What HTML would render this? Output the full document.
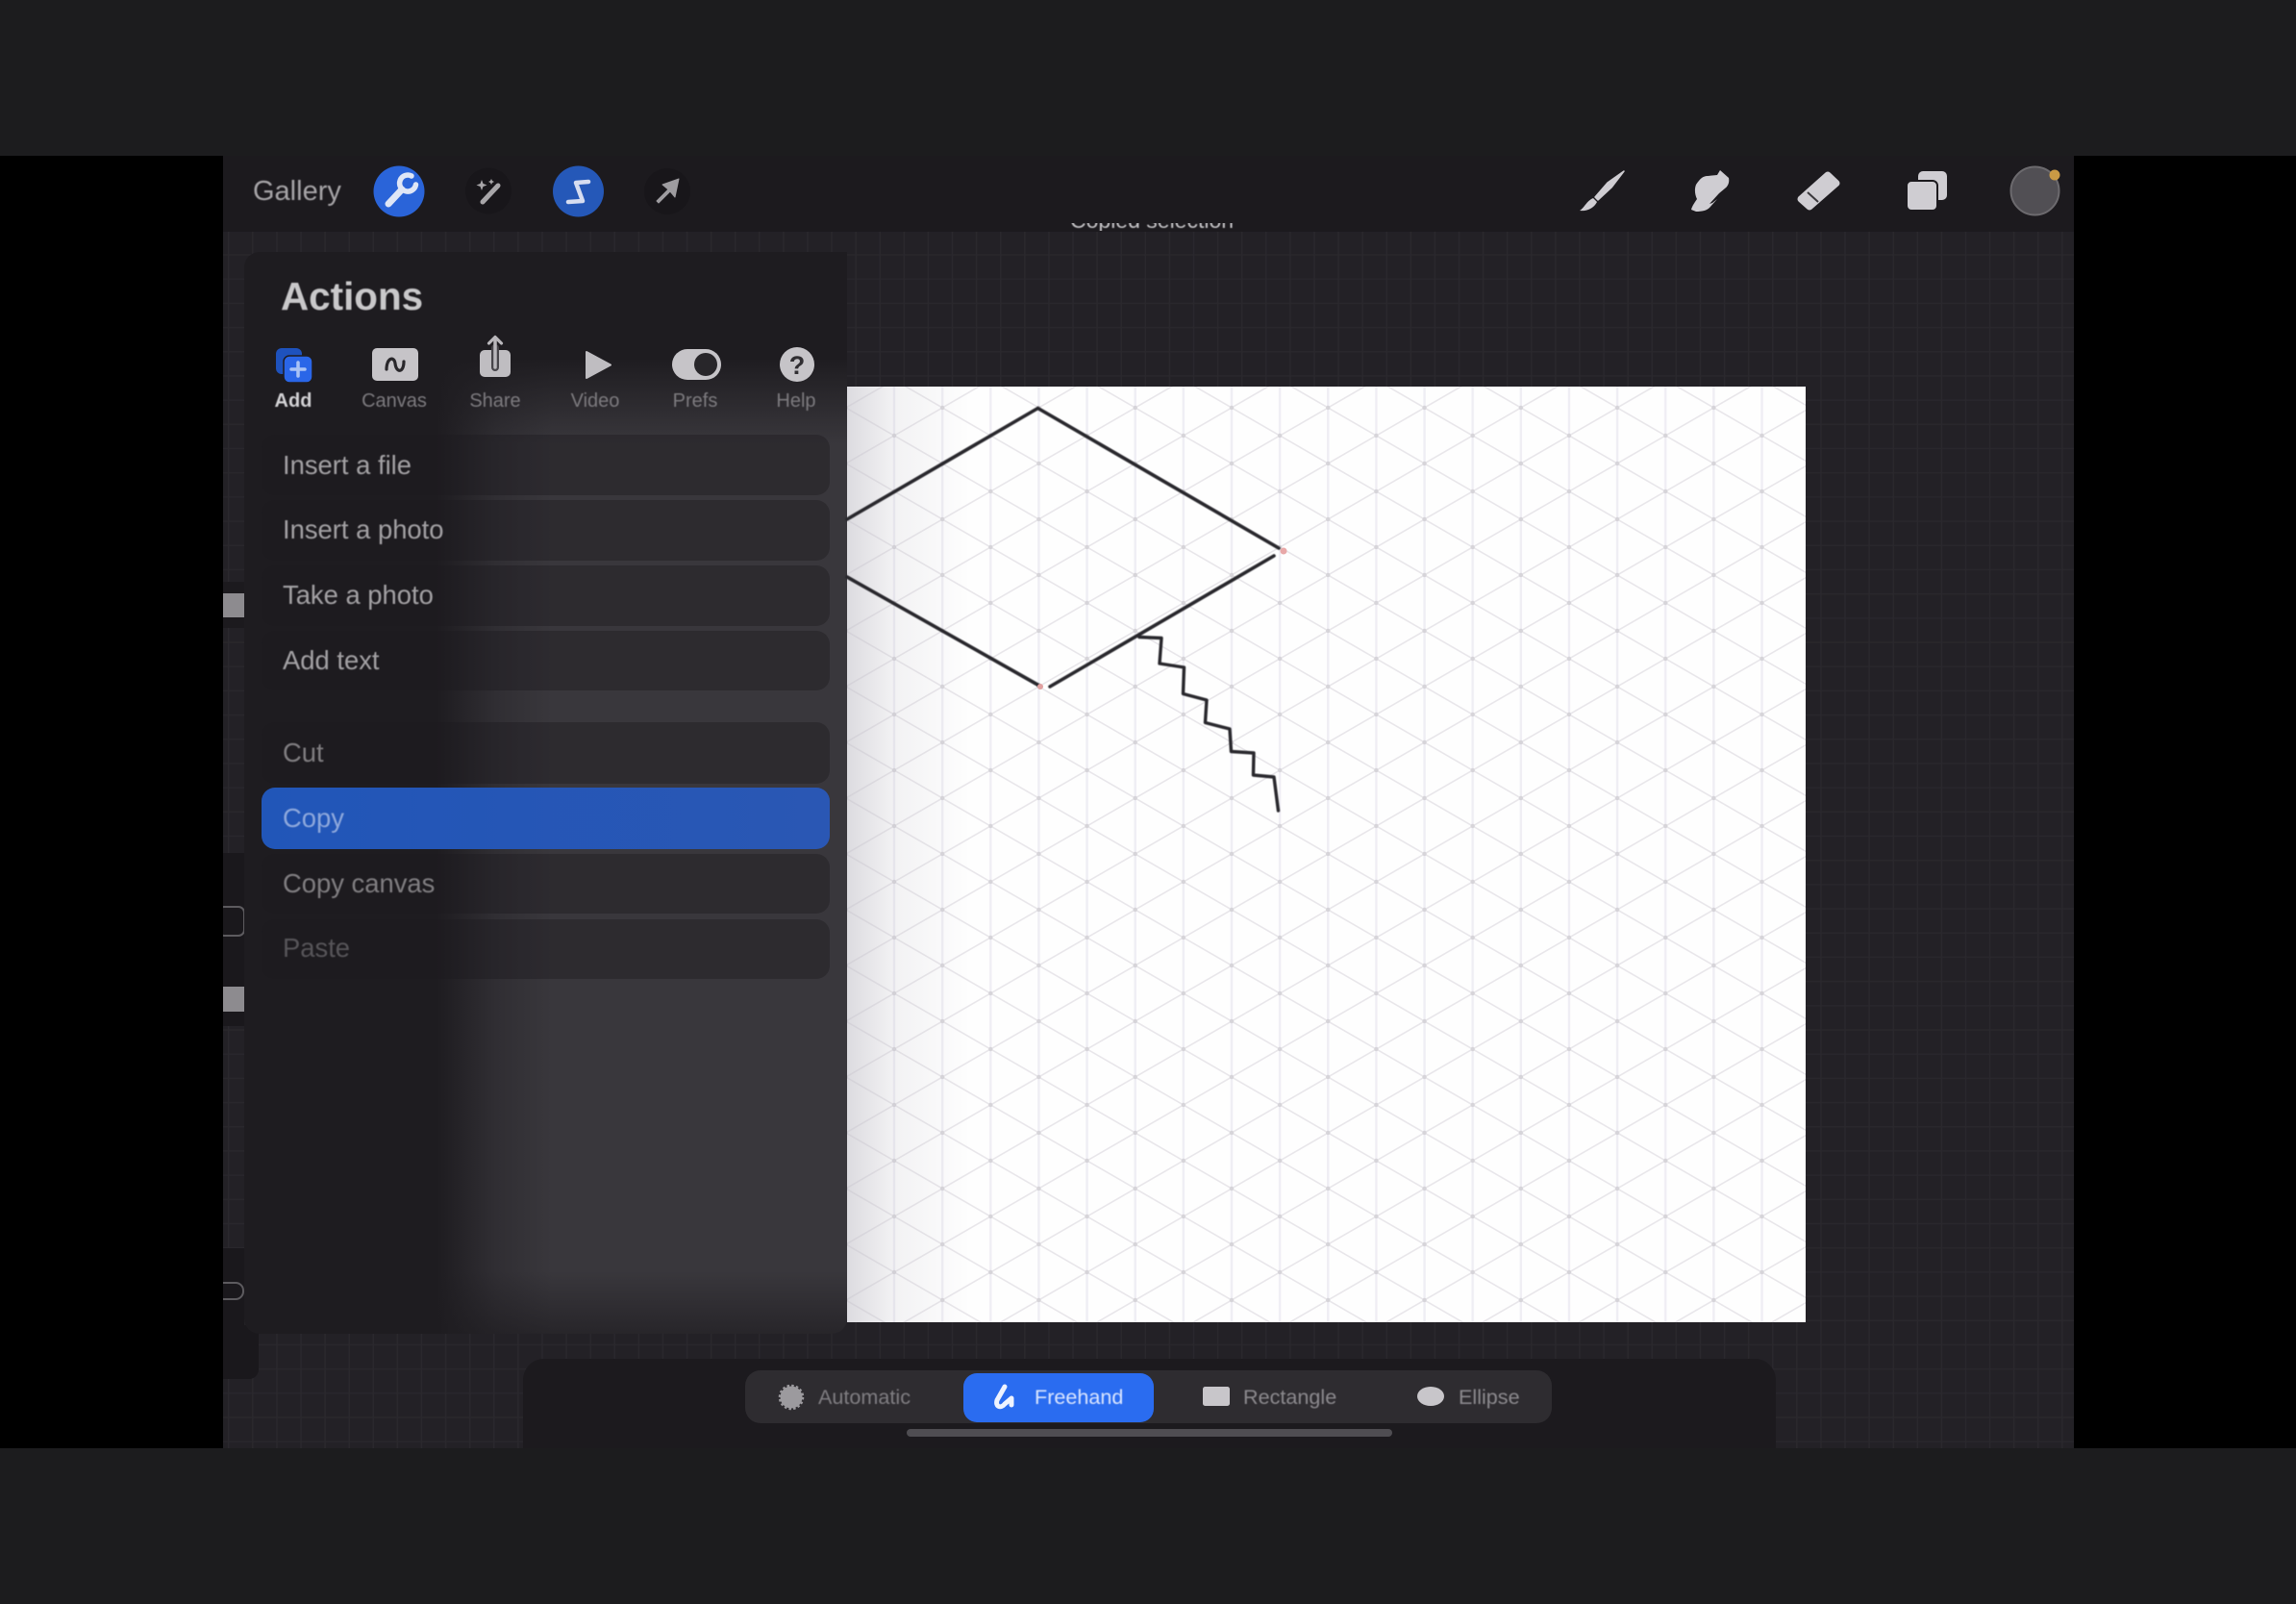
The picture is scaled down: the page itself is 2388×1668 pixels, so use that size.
<!DOCTYPE html>
<html><head><meta charset="utf-8"><style>
html,body{margin:0;padding:0;background:#1c1c1e;}
body{position:relative;width:2388px;height:1668px;overflow:hidden;font-family:"Liberation Sans",sans-serif;}
.a{position:absolute;}
.t{position:absolute;white-space:nowrap;filter:blur(.5px);}
.row{position:absolute;left:272px;width:591px;background:rgba(28,26,30,.42);border-radius:14px;}
.rt{position:absolute;left:294px;font-size:27.4px;line-height:32px;white-space:nowrap;filter:blur(.5px);}
.tab{position:absolute;top:405px;width:110px;text-align:center;font-size:20px;line-height:24px;color:#7d7b7f;filter:blur(.5px);}
.btm{position:absolute;top:1440px;font-size:21.6px;line-height:26px;color:#807e82;white-space:nowrap;filter:blur(.5px);}
</style></head><body>

<div class="a" style="left:0;top:162px;width:2388px;height:1344px;background:#000"></div>
<div class="a" style="left:232px;top:162px;width:1925px;height:1344px;background-color:#232126;background-image:linear-gradient(90deg,#2a282d 1.5px,transparent 1.5px),linear-gradient(0deg,#29272c 1.5px,transparent 1.5px);background-size:25.1px 25.2px;background-position:5px 3px"></div>
<div class="a" style="left:232px;top:162px;width:1925px;height:79px;background:#1c1a1e"></div>

<!-- left sidebar remnants -->
<div class="a" style="left:232px;top:605px;width:22px;height:48px;background:#1c1a1e"></div>
<div class="a" style="left:232px;top:617px;width:22px;height:25px;background:#8d8b8f"></div>
<div class="a" style="left:232px;top:887px;width:22px;height:180px;background:#1a181c"></div>
<div class="a" style="left:226px;top:942px;width:25px;height:28px;border:2px solid #5d5b5f;border-radius:7px;box-sizing:content-box"></div>
<div class="a" style="left:232px;top:1026px;width:22px;height:26px;background:#8d8b8f"></div>
<div class="a" style="left:232px;top:1298px;width:22px;height:90px;background:#1a181c"></div>
<div class="a" style="left:232px;top:1378px;width:37px;height:56px;background:#1a181c;border-radius:0 10px 10px 0"></div>
<div class="a" style="left:224px;top:1333px;width:26px;height:15px;border:2px solid #5d5b5f;border-radius:9px"></div>
<div class="a" style="left:0;top:162px;width:232px;height:1344px;background:#000"></div>

<!-- actions panel -->
<div class="a" style="left:254px;top:262px;width:627px;height:1125px;border-radius:16px 0 16px 16px;background:linear-gradient(180deg,#1e1c20 0,#1e1c20 110px,rgba(30,28,32,0) 200px,rgba(30,28,32,0) 1060px,rgba(30,28,32,.65) 1125px),linear-gradient(90deg,#1e1c20 0,#1e1c20 200px,#302e33 262px,#39373c 320px,#39373c 100%)"></div>
<div class="row" style="top:452px;height:63px"></div>
<div class="row" style="top:520px;height:63px"></div>
<div class="row" style="top:588px;height:63px"></div>
<div class="row" style="top:656px;height:62px"></div>
<div class="row" style="top:751px;height:64px"></div>
<div class="row" style="top:819px;height:64px;background:linear-gradient(90deg,#2156b8,#2a57b4)"></div>
<div class="row" style="top:888px;height:62px"></div>
<div class="row" style="top:956px;height:62px"></div>

<div class="t" style="left:292px;top:284px;font-size:40.4px;line-height:48px;font-weight:bold;color:#c9c8ca">Actions</div>
<div class="tab" style="left:250px;color:#d4d3d6;font-weight:bold">Add</div>
<div class="tab" style="left:355px">Canvas</div>
<div class="tab" style="left:460px">Share</div>
<div class="tab" style="left:564px">Video</div>
<div class="tab" style="left:668px">Prefs</div>
<div class="tab" style="left:773px">Help</div>

<div class="rt" style="top:468px;color:#a3a1a4">Insert a file</div>
<div class="rt" style="top:535px;color:#a3a1a4">Insert a photo</div>
<div class="rt" style="top:603px;color:#a3a1a4">Take a photo</div>
<div class="rt" style="top:671px;color:#a3a1a4">Add text</div>
<div class="rt" style="top:767px;color:#807e81">Cut</div>
<div class="rt" style="top:835px;color:#8ea8dc">Copy</div>
<div class="rt" style="top:903px;color:#807e81">Copy canvas</div>
<div class="rt" style="top:970px;color:#575559">Paste</div>

<div class="t" style="left:263px;top:182px;font-size:29px;line-height:34px;color:#a6a4a7">Gallery</div>

<!-- toast clipped -->
<div class="a" style="left:1100px;top:232px;width:200px;height:8px;overflow:hidden">
  <div class="t" style="left:13px;top:-17px;font-size:23px;line-height:28px;color:#c4c3c6">Copied selection</div>
</div>

<!-- bottom bar -->
<div class="a" style="left:544px;top:1413px;width:1303px;height:93px;background:#1c1a1e;border-radius:22px 22px 0 0"></div>
<div class="a" style="left:775px;top:1425px;width:839px;height:55px;background:#2e2c30;border-radius:16px"></div>
<div class="a" style="left:1002px;top:1428px;width:198px;height:51px;background:#2a6cf0;border-radius:14px"></div>
<div class="a" style="left:943px;top:1486px;width:505px;height:8px;background:#4f4d52;border-radius:4px"></div>
<div class="btm" style="left:851px">Automatic</div>
<div class="btm" style="left:1076px;color:#dbe6ff">Freehand</div>
<div class="btm" style="left:1293px;color:#8c8a8e">Rectangle</div>
<div class="btm" style="left:1517px;color:#8c8a8e">Ellipse</div>

<svg class="a" style="left:0;top:0" width="2388" height="1668" viewBox="0 0 2388 1668" fill="none">
<defs>
  <pattern id="iso" patternUnits="userSpaceOnUse" x="930" y="395" width="100.28" height="58">
    <path d="M0 0V58M50.14 0V58M100.28 0V58" stroke="#efeef4" stroke-width="2.4"/>
    <path d="M0 0L50.14 29L100.28 0M0 58L50.14 29L100.28 58" stroke="#e8e6ea" stroke-width="1.6"/>
    <circle cx="0" cy="0" r="2.2" fill="#d6d4d9"/><circle cx="100.28" cy="0" r="2.2" fill="#d6d4d9"/>
    <circle cx="0" cy="58" r="2.2" fill="#d6d4d9"/><circle cx="100.28" cy="58" r="2.2" fill="#d6d4d9"/>
    <circle cx="50.14" cy="29" r="2.2" fill="#d6d4d9"/>
  </pattern>
  <linearGradient id="shade" gradientUnits="userSpaceOnUse" x1="881" y1="0" x2="1010" y2="0">
    <stop offset="0" stop-color="#c4c2ca" stop-opacity=".58"/>
    <stop offset=".38" stop-color="#c4c2ca" stop-opacity=".2"/>
    <stop offset="1" stop-color="#c4c2ca" stop-opacity="0"/>
  </linearGradient>
</defs>

<!-- canvas -->
<rect x="881" y="402" width="997" height="973" fill="#fefefe"/>
<rect x="881" y="402" width="997" height="973" fill="url(#iso)"/>
<rect x="881" y="402" width="130" height="973" fill="url(#shade)"/>

<!-- drawing -->
<g stroke="#29282d" stroke-linecap="round" stroke-linejoin="round" style="filter:blur(.4px)">
  <path d="M881 540L1079.5 424.5L1330 570" stroke-width="3.6"/>
  <path d="M1325 578L1092 714" stroke-width="3.6"/>
  <path d="M1081 713L881 600" stroke-width="3.6"/>
  <path d="M1185 662.5L1208 663.5L1206 690L1231.5 694L1230.5 721.5L1255 728L1253.5 751.5L1279 758L1280.5 781.5L1304 783L1303.5 806L1325 808L1329.5 843" stroke-width="3.4"/>
</g>
<circle cx="1335" cy="573" r="3.5" fill="#e8a8a8"/>
<circle cx="1082" cy="714" r="3" fill="#e0a0a0"/>

<!-- top-left tools -->
<circle cx="415" cy="199" r="26.5" fill="#2a64d9"/>
<path d="M428 183a8.5 8.5 0 1 0 4.5 9" stroke="#dfe6f6" stroke-width="5.500" stroke-linecap="round"/>
<path d="M404 212L418 197" stroke="#dfe6f6" stroke-width="7" stroke-linecap="round"/>
<circle cx="508" cy="198.500" r="24" fill="#18161a"/>
<path d="M502 210L518 193" stroke="#a8a6a9" stroke-width="5" stroke-linecap="round"/>
<path d="M501 187l1.500 4 4 1.500-4 1.500-1.500 4-1.500-4-4-1.500 4-1.500zM511 186l1 2 2 1-2 1-1 2-1-2-2-1 2-1z" fill="#a8a6a9"/>
<circle cx="601.500" cy="199" r="26.500" fill="#2558b8"/>
<path d="M612 189L599 190L606 209L591 210" stroke="#d6ddf0" stroke-width="4.500" stroke-linecap="round" stroke-linejoin="round"/>
<circle cx="694" cy="199" r="24" fill="#18161a"/>
<path d="M706 186L689 192L695 197L683 209L685 211L697 199L702 205Z" fill="#9e9ca0" stroke="#9e9ca0" stroke-width="1" stroke-linejoin="round"/>

<!-- top-right tools -->
<g fill="#cfcdd2">
  <path d="M1689 178L1676 195L1662 208L1659 205L1672 190Z" stroke="#cfcdd2" stroke-width="1.500" stroke-linejoin="round"/>
  <path d="M1657 206L1661 210C1658 216 1651 220 1643 219C1648 216 1650 209 1657 206Z"/>
  <path d="M1764 192C1768 186 1771 183 1776 183L1786 182L1789 177L1798 185C1799 190 1797 194 1794 196L1788 201L1778 212L1781 211L1786 207L1778 216C1775 219 1770 220 1764 220L1759 218C1760 214 1763 210 1765 207C1763 203 1762 197 1764 192Z"/>
  <path d="M1901 182L1910 190.500L1882 215L1873 207Z" stroke="#cfcdd2" stroke-width="7" stroke-linejoin="round"/>
  <rect x="1995" y="178" width="30" height="30" rx="5"/>
  <rect x="1983" y="188" width="32" height="31" rx="5" stroke="#1c1a1e" stroke-width="2"/>
</g>
<path d="M1880 200L1891 210" stroke="#3a383c" stroke-width="2"/>
<circle cx="2116.500" cy="198.500" r="25" fill="#514f54" stroke="#6c6a6e" stroke-width="2"/>
<circle cx="2137" cy="182" r="5.500" fill="#c99a45"/>

<!-- tab icons -->
<rect x="287" y="362" width="27" height="27" rx="6" fill="#1e52bd"/>
<rect x="295" y="370" width="30" height="28" rx="6" fill="#2a66e8" stroke="#1e1c20" stroke-width="1.500"/>
<path d="M310 377V391M303 384H317" stroke="#a9c3f5" stroke-width="3.500" stroke-linecap="round"/>

<rect x="387" y="362" width="48" height="34" rx="5" fill="#c6c4c8"/>
<path d="M402 384C402 372 410 370 411 378C412 388 420 388 420 376" stroke="#29272b" stroke-width="3.200" stroke-linecap="round"/>

<rect x="499" y="364" width="32" height="28" rx="5" fill="#bfbdc1"/>
<path d="M515 362V382" stroke="#47454a" stroke-width="8" stroke-linecap="round"/>
<path d="M515 353V382" stroke="#b9b7bb" stroke-width="3.500" stroke-linecap="round"/>
<path d="M508.500 357L515 350.500L521.500 357" stroke="#b9b7bb" stroke-width="3.200" stroke-linecap="round" stroke-linejoin="round"/>

<path d="M610 366L635 379.500L610 393Z" fill="#bfbdc1" stroke="#bfbdc1" stroke-width="2" stroke-linejoin="round"/>

<rect x="699" y="363" width="51" height="32" rx="16" fill="#c6c4c8"/>
<circle cx="734" cy="379" r="12" fill="#28262a"/>

<circle cx="829" cy="379" r="18" fill="#c6c4c8"/>
<text x="829" y="389" text-anchor="middle" font-family="Liberation Sans, sans-serif" font-size="27" font-weight="bold" fill="#302e32">?</text>

<!-- bottom icons -->
<circle cx="823" cy="1453" r="11.500" fill="#9c9a9e"/>
<circle cx="823" cy="1453" r="12" stroke="#9c9a9e" stroke-width="2.500" stroke-dasharray="2.500 2.200"/>
<path d="M1045 1442L1037 1456C1035 1463 1041 1465 1045 1460L1052 1454L1052 1461" stroke="#eef3ff" stroke-width="5" stroke-linecap="round" stroke-linejoin="round"/>
<rect x="1251" y="1442" width="28" height="20" rx="2.500" fill="#c8c6ca"/>
<ellipse cx="1488" cy="1452" rx="14" ry="10" fill="#c8c6ca"/>
</svg>
</body></html>
